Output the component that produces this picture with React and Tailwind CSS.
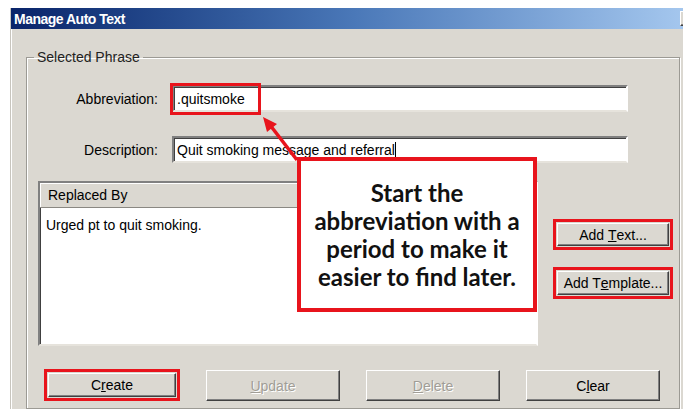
import React from 'react';

// Classic raised 3D button bevel
const raised =
  "flex items-center justify-center bg-[#dbd8d1] border border-t-white border-l-white border-r-[#404040] border-b-[#404040] shadow-[inset_-1px_-1px_0_#808080]";

// Sunken field bevel
const sunken =
  "bg-white border-2 border-t-[#808080] border-l-[#808080] border-r-white border-b-[#e6e3dc] shadow-[inset_1px_1px_0_#404040]";

const Field = ({ label, children }) => (
  <div className="flex items-center h-[27px]">
    <span className="w-[131px] text-right">{label}</span>
    <div className={`ml-[14px] w-[456px] h-[27px] flex items-center pl-[3px] ${sunken}`}>{children}</div>
  </div>
);

const App = () => {
  return (
    <div className="relative w-[683px] h-[409px] overflow-hidden bg-white font-['Liberation_Sans',Arial,sans-serif] text-[14px] leading-[16px] text-black">
      <div className="ml-[10px] mt-[8px] w-[686px] h-[401px] flex flex-col bg-[#dbd8d1] border-l border-[#c8c5be] shadow-[inset_1px_0_0_#fff]">
        {/* title bar */}
        <div className="h-[22px] flex items-center pl-[3px] pr-[2px] bg-gradient-to-r from-[#0a246a] via-[#4a78b8] to-[#a8caf0]">
          <span className="text-white font-bold text-[14px] tracking-[-0.5px]">Manage Auto Text</span>
          <div className={`ml-auto w-[14px] h-[15px] text-[11px] font-bold ${raised}`}>X</div>
        </div>

        <div className="flex-1 pl-[15px] pt-[20px]">
          <fieldset className="w-[654px] h-[360px] border border-[#9c9a94] shadow-[inset_1px_1px_0_#fff,1px_1px_0_#fff]">
            <legend className="ml-[7px] px-[3px] leading-[16px] text-[#222]">Selected Phrase</legend>

            <div className="mt-[20px]">
              <Field label="Abbreviation:">
                <span>.quitsmoke</span>
              </Field>
            </div>
            <div className="mt-[24px]">
              <Field label="Description:">
                <span>Quit smoking message and referral</span>
                <span className="inline-block w-[1px] h-[16px] bg-black" />
              </Field>
            </div>

            <div className="mt-[18px] flex">
              <div className={`ml-[11px] w-[500px] h-[165px] flex flex-col ${sunken}`}>
                <div className="h-[25px] flex items-center pl-[8px] bg-[#dbd8d1] border-b border-[#8a8882] shadow-[inset_1px_1px_0_#fff]">
                  Replaced By
                </div>
                <div className="pl-[6px] pt-[9px]">Urged pt to quit smoking.</div>
              </div>

              <div className="ml-[15px] flex flex-col">
                <div className="mt-[38px] w-[120px] h-[31px] border-[3px] border-[#e8141c] p-[1px]">
                  <div className={`h-full ${raised}`}>
                    Add&nbsp;<u>T</u>ext...
                  </div>
                </div>
                <div className="mt-[17px] w-[120px] h-[32px] border-[3px] border-[#e8141c] p-[1px]">
                  <div className={`h-full ${raised}`}>
                    Add T<u>e</u>mplate...
                  </div>
                </div>
              </div>
            </div>

            <div className="mt-[23px] ml-[17px] flex items-start gap-[26px]">
              <div className="w-[136px] h-[32px] border-[3px] border-[#e8141c] p-[1px]">
                <div className={`h-full ${raised}`}>
                  C<u>r</u>eate
                </div>
              </div>
              <div className={`mt-[1px] w-[134px] h-[31px] text-[#a09d96] [text-shadow:1px_1px_0_#fff] ${raised}`}>
                <u>U</u>pdate
              </div>
              <div className={`mt-[1px] w-[134px] h-[31px] text-[#a09d96] [text-shadow:1px_1px_0_#fff] ${raised}`}>
                <u>D</u>elete
              </div>
              <div className={`mt-[1px] w-[134px] h-[31px] ${raised}`}>
                C<u>l</u>ear
              </div>
            </div>
          </fieldset>
        </div>
      </div>

      {/* highlight around the abbreviation */}
      <div className="absolute left-[170px] top-[83px] w-[91px] h-[32px] border-[3px] border-[#e8141c]" />

      {/* pointer arrow */}
      <svg className="absolute left-[250px] top-[108px]" width="60" height="60" viewBox="0 0 60 60">
        <line x1="47" y1="52" x2="20" y2="17" stroke="#e8141c" strokeWidth="3.5" />
        <polygon points="13,9 27,16 17,24" fill="#e8141c" />
      </svg>

      {/* callout */}
      <div className="absolute left-[297px] top-[157px] w-[240px] h-[155px] bg-white border-[4px] border-[#e8141c] flex items-center justify-center text-center font-['Lato',sans-serif] font-bold text-[24px] leading-[28px] text-[#111]">
        Start the
        <br />
        abbreviation with a
        <br />
        period to make it
        <br />
        easier to find later.
      </div>
    </div>
  );
};

export default App;
